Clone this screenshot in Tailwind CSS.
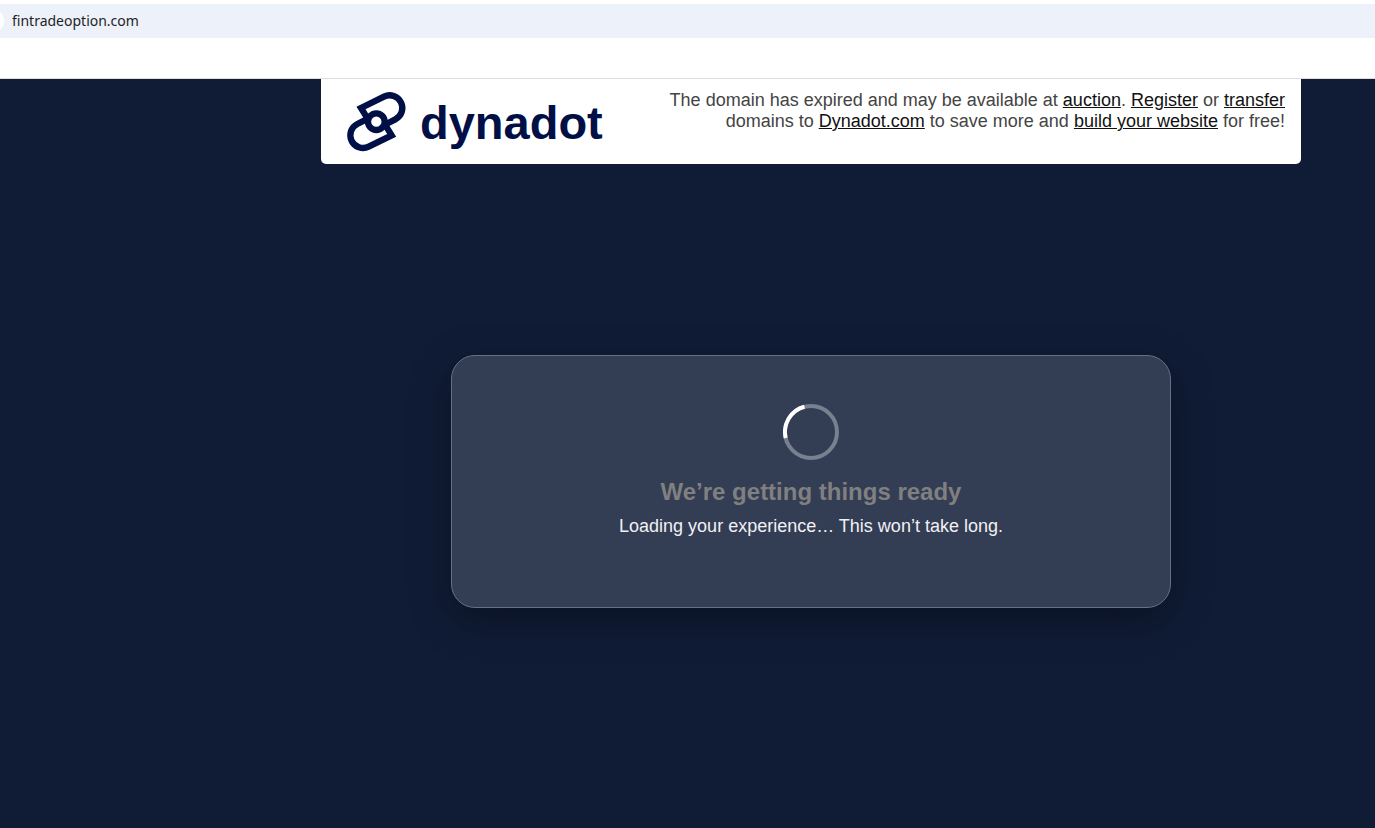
<!DOCTYPE html>
<html lang="en">
<head>
    <meta charset="UTF-8">
    <meta name="viewport" content="width=device-width, initial-scale=1.0">
    <title>fintradeoption.com</title>
    <script src="https://cdn.jsdelivr.net/npm/@tailwindcss/browser@4"></script>
</head>
<body class="min-h-screen flex flex-col bg-[#101c36] font-['Liberation_Sans',Arial,sans-serif]">
    <!-- Address bar -->
    <div class="bg-white pt-1 pb-10 border-b border-[#dedede]">
        <div class="relative h-[34px] flex items-center overflow-hidden bg-[#edf1fa] px-3">
            <span class="absolute -left-5 w-6 h-6 rounded-full bg-white"></span>
            <span class="font-['Noto_Sans',sans-serif] text-sm text-[#1f1f1f]">fintradeoption.com</span>
        </div>
    </div>

    <div class="flex-1 flex flex-col items-center pl-[247px]">
        <header class="w-full max-w-[980px] h-[85px] flex justify-between bg-white rounded-b-[5px] pl-[26px] pr-4">
            <a href="#" aria-label="dynadot" class="flex items-start gap-3.5 pt-3 text-[#000f45]">
                <svg class="w-[59px] h-[62px] overflow-visible" viewBox="20 18 177 186" fill="none" stroke="currentColor" stroke-width="19">
                    <path d="M80 98L62 69L131 35A38 38 0 0 1 165 103L132 120"/>
                    <path d="M80 98L62 69L131 35A38 38 0 0 1 165 103L132 120" transform="rotate(180 108 110)"/>
                    <circle cx="108" cy="110" r="25"/>
                </svg>
                <span class="pt-1 text-[47px] leading-[56px] font-bold">dynadot</span>
            </a>
            <p class="max-w-[640px] pt-[11px] text-right text-lg leading-[21px] text-[#444]">
                The domain has expired and may be available at <a href="#" class="text-[#111] underline">auction</a>. <a href="#" class="text-[#111] underline">Register</a> or <a href="#" class="text-[#111] underline">transfer</a><br>
                domains to <a href="#" class="text-[#111] underline">Dynadot.com</a> to save more and <a href="#" class="text-[#111] underline">build your website</a> for free!
            </p>
        </header>

        <main class="w-full max-w-[720px] mt-[191px] flex flex-col items-center rounded-3xl border border-[#667083] bg-[#333d54] pt-12 pb-[67px] text-center shadow-[0_12px_40px_rgba(0,0,0,0.35)]">
            <svg class="w-14 h-14" viewBox="0 0 56 56" fill="none" stroke-width="4">
                <circle cx="28" cy="28" r="26" stroke="#78818f"/>
                <path d="M2.7 34A26 26 0 0 1 21.5 2.8" stroke="#fff"/>
            </svg>
            <h1 class="mt-4 text-2xl leading-8 font-bold text-[#808080]">We’re getting things ready</h1>
            <p class="mt-1 text-lg leading-7 text-[#f0f1f4]">Loading your experience… This won’t take long.</p>
        </main>
    </div>
</body>
</html>
